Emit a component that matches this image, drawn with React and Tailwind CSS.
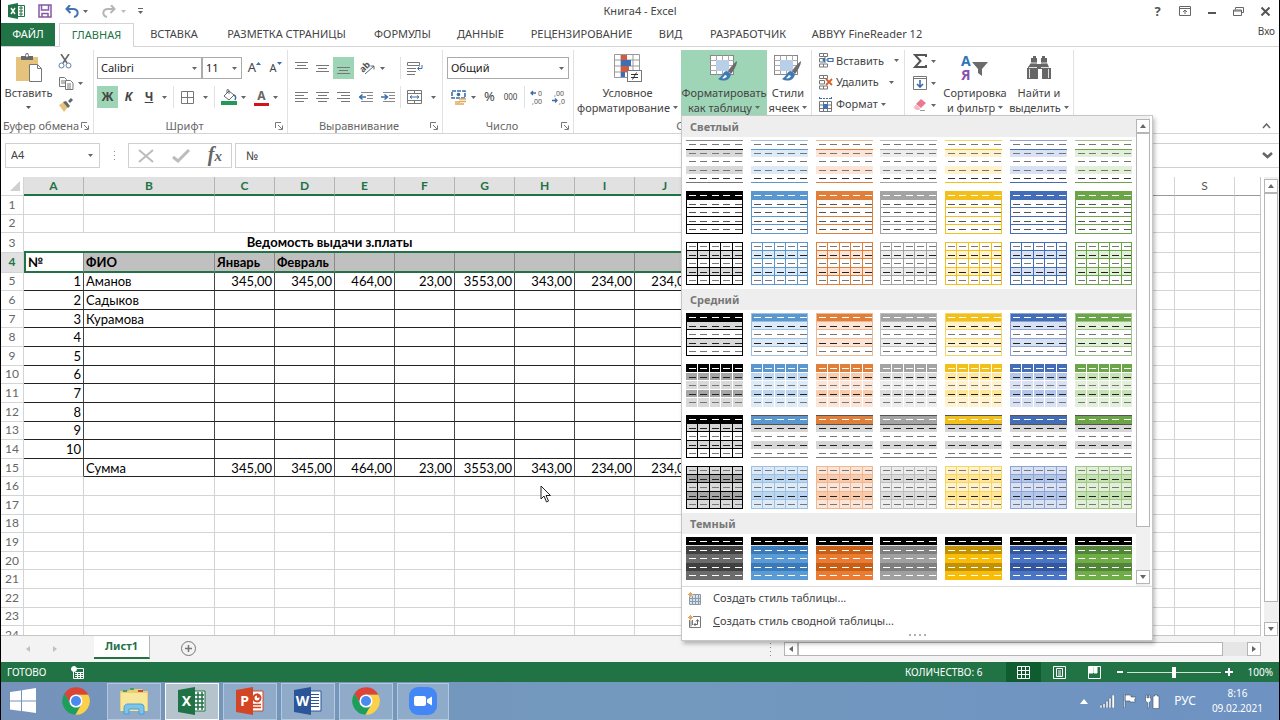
import React from 'react';

const UI_FONT = 'font-["Noto_Sans","Open_Sans",sans-serif]';
const CELL_FONT = 'font-["Lato","Noto_Sans",sans-serif]';

const TABS = [
  { label: 'ВСТАВКА', width: 'w-[76px]' },
  { label: 'РАЗМЕТКА СТРАНИЦЫ', width: 'w-[149px]' },
  { label: 'ФОРМУЛЫ', width: 'w-[83px]' },
  { label: 'ДАННЫЕ', width: 'w-[73px]' },
  { label: 'РЕЦЕНЗИРОВАНИЕ', width: 'w-[129px]' },
  { label: 'ВИД', width: 'w-[49px]' },
  { label: 'РАЗРАБОТЧИК', width: 'w-[106px]' },
  { label: 'ABBYY FineReader 12', width: 'w-[132px]' },
];

const PALETTES = [
  { accent: '#000000', tint: '#d9d9d9', mid: '#a6a6a6', soft: '#000000', dark: '#404040', light: '#6b6b6b' },
  { accent: '#5b97cf', tint: '#ddebf9', mid: '#bdd7f0', soft: '#9dc0e2', dark: '#3a7ab8', light: '#5b9bd5' },
  { accent: '#e07f3a', tint: '#fce4d6', mid: '#f8cbad', soft: '#efb893', dark: '#c85f16', light: '#ea7b33' },
  { accent: '#a3a3a3', tint: '#ededed', mid: '#dbdbdb', soft: '#bdbdbd', dark: '#7f7f7f', light: '#a0a0a0' },
  { accent: '#f3bf1b', tint: '#fff2cc', mid: '#ffe699', soft: '#f5d565', dark: '#c29204', light: '#f8bd08' },
  { accent: '#446db8', tint: '#d9e1f5', mid: '#b4c6ea', soft: '#8ea5d4', dark: '#35579e', light: '#4a74c4' },
  { accent: '#6ca548', tint: '#e2f0da', mid: '#c6e2b4', soft: '#a0c587', dark: '#52853a', light: '#6fad47' },
];

const SECTIONS = [
  { title: 'Светлый', styles: ['lines', 'boxed', 'grid'] },
  { title: 'Средний', styles: ['banded', 'blocks', 'gray', 'tinted'] },
  { title: 'Темный', styles: ['dark'] },
];

const COL_X = [0, 11, 23, 34, 46, 57];
const ROW_Y = [0, 9, 17, 26, 34, 43];

const COLUMNS = 'ABCDEFGHIJKLMNOPQRST'.split('');
const LAST_SELECTED = 9;

const AMOUNTS = ['345,00', '345,00', '464,00', '23,00', '3553,00', '343,00', '234,00', '234,00'];
const CELLS = {
  4: ['№', 'ФИО', 'Январь', 'Февраль'],
  5: ['1', 'Аманов', ...AMOUNTS],
  6: ['2', 'Садыков'],
  7: ['3', 'Курамова'],
  8: ['4'],
  9: ['5'],
  10: ['6'],
  11: ['7'],
  12: ['8'],
  13: ['9'],
  14: ['10'],
  15: ['', 'Сумма', ...AMOUNTS],
};

function Caret({ className = 'text-[#666]' }) {
  return (
    <svg width="5" height="3" viewBox="0 0 5 3" className={`shrink-0 ${className}`}>
      <path d="M0 0H5L2.5 3Z" fill="currentColor" />
    </svg>
  );
}

/* ---------- Table style gallery ---------- */

function rowFill(style, p, row) {
  const odd = row % 2 === 1;
  if (style === 'dark') return row === 0 ? '#000' : odd ? p.dark : p.light;
  if (row === 0 && ['boxed', 'banded', 'blocks', 'gray'].includes(style)) return p.accent;
  if (style === 'boxed') return '#fff';
  if (style === 'blocks' || style === 'tinted') return odd ? p.mid : p.tint;
  if (style === 'gray') return odd ? '#d6d6d6' : '#fff';
  return odd ? p.tint : '#fff';
}

function dashFill(style, row) {
  if (style === 'dark') return '#fff';
  if (row === 0 && ['boxed', 'banded', 'blocks', 'gray'].includes(style)) return '#fff';
  if (style === 'lines') return row === 4 ? '#333' : '#777';
  if (style === 'boxed') return '#555';
  return row % 2 ? '#222' : '#777';
}

function StyleSwatch({ style, palette }) {
  const isBlack = palette.accent === '#000000';
  const line = style === 'banded' || style === 'tinted' ? palette.soft : palette.accent;
  const hasGrid = style === 'grid' || style === 'tinted' || (style === 'gray' && isBlack);
  const hasRows = hasGrid || style === 'boxed' || style === 'banded';

  return (
    <svg width="57" height="43" viewBox="0 0 57 43" shapeRendering="crispEdges" className="block">
      {[0, 1, 2, 3, 4].map((r) => (
        <rect key={r} y={ROW_Y[r]} width="57" height={ROW_Y[r + 1] - ROW_Y[r]} fill={rowFill(style, palette, r)} />
      ))}
      {hasRows && [1, 2, 3, 4].map((r) => <rect key={r} y={ROW_Y[r] - 1} width="57" height="1" fill={line} />)}
      {hasGrid && [1, 2, 3, 4].map((c) => <rect key={c} x={COL_X[c]} width="1" height="43" fill={line} />)}
      {hasRows && <rect x="0.5" y="0.5" width="56" height="42" fill="none" stroke={line} />}
      {style === 'blocks' && (
        <>
          {[1, 2, 3, 4].map((c) => <rect key={c} x={COL_X[c]} width="1" height="43" fill="#fff" />)}
          {[1, 2, 3, 4].map((r) => <rect key={r} y={ROW_Y[r] - 1} width="57" height="1" fill="#fff" />)}
        </>
      )}
      {style === 'lines' && (
        <>
          <rect width="57" height="1" fill={isBlack ? '#888' : palette.soft} />
          <rect y="9" width="57" height="1" fill={palette.accent} />
          <rect y="42" width="57" height="1" fill={isBlack ? '#777' : palette.accent} />
        </>
      )}
      {style === 'gray' && !isBlack && (
        <>
          <rect width="57" height="1" fill="#555" />
          <rect y="9" width="57" height="1" fill="#555" />
          <rect y="42" width="57" height="1" fill="#777" />
        </>
      )}
      {style === 'dark' && <rect y="8" width="57" height="1" fill="#ddd" />}
      {[0, 1, 2, 3, 4].map((r) =>
        [0, 1, 2, 3, 4].map((c) => (
          <rect key={`${r}-${c}`} x={COL_X[c] + 3} y={ROW_Y[r] + 4} width="7" height="1" fill={dashFill(style, r)} />
        ))
      )}
    </svg>
  );
}

function ScrollButton({ dir, label }) {
  const paths = { up: 'M1 6L4 2L7 6Z', down: 'M1 2L4 6L7 2Z', left: 'M6 1L2 4L6 7Z', right: 'M2 1L6 4L2 7Z' };
  return (
    <button aria-label={label} className="flex h-[14px] w-[14px] shrink-0 items-center justify-center border border-[#b5b5b5] bg-white">
      <svg width="8" height="8" viewBox="0 0 8 8"><path d={paths[dir]} fill="#666" /></svg>
    </button>
  );
}

function StyleGallery() {
  return (
    <div className="absolute left-0 top-full z-20 w-[472px] border border-[#c6c6c6] bg-white text-[#444] shadow-[2px_3px_4px_rgba(0,0,0,0.25)]">
      <div className="flex h-[470px]">
        <div className="flex-1 overflow-hidden">
          {SECTIONS.map((section) => (
            <div key={section.title} className="pb-1">
              <h3 className="h-[21px] bg-[#eeeeee] pl-2 text-left text-[11px] font-bold leading-[21px] text-[#777]">{section.title}</h3>
              <div className="flex flex-col gap-2 px-1 pt-[3px]">
                {section.styles.map((style) => (
                  <div key={style} className="flex justify-between">
                    {PALETTES.map((p) => (
                      <button key={p.accent} aria-label={`${section.title} ${style}`}>
                        <StyleSwatch style={style} palette={p} />
                      </button>
                    ))}
                  </div>
                ))}
              </div>
            </div>
          ))}
        </div>
        <div className="mr-[2px] flex flex-col bg-[#f0f0f0] pb-[2px] pt-[3px]">
          <ScrollButton dir="up" label="Вверх" />
          <div className="h-[394px] border border-[#b5b5b5] bg-white" />
          <div className="flex-1" />
          <ScrollButton dir="down" label="Вниз" />
        </div>
      </div>
      <div className="border-t border-[#dcdcdc] text-[11px]">
        <button className="flex h-[23px] w-full items-center gap-3 pl-[6px] text-left">
          <svg width="13" height="13" viewBox="0 0 13 13">
            <path d="M3.5 2.5h9v10h-11v-8M1.5 6.5h11M1.5 9.5h11M4.5 4v8.5M7.5 2.5v10M10.5 2.5v10" fill="#d5e3f1" stroke="#8c9aa8" />
            <path d="M0 2.5h5M2.5 0v5M1 1l3 3M4 1L1 4" stroke="#e2a864" />
          </svg>
          <span>Созд<u>а</u>ть стиль таблицы...</span>
        </button>
        <button className="flex h-[22px] w-full items-center gap-3 pl-[6px] text-left">
          <svg width="13" height="13" viewBox="0 0 13 13">
            <path d="M5 1.5h7.5v11h-11V5M4.5 5v5M3 5.5v6" fill="none" stroke="#777" />
            <path d="M6 9.5h3.5V5M8 6.5l1.5-2 1.5 2M7.5 8L6 9.5 7.5 11" fill="none" stroke="#666" />
            <path d="M0 2.5h5M2.5 0v5M1 1l3 3M4 1L1 4" stroke="#e2a864" />
          </svg>
          <span><u>С</u>оздать стиль сводной таблицы...</span>
        </button>
        <div className="flex h-2 items-start justify-center gap-[3px] pt-[2px]">
          {[0, 1, 2, 3].map((i) => <i key={i} className="h-[2px] w-[2px] bg-[#b0b0b0]" />)}
        </div>
      </div>
    </div>
  );
}

/* ---------- Ribbon ---------- */

function Group({ label, width, launcher, children }) {
  return (
    <section className={`flex shrink-0 flex-col border-r border-[#e1e1e1] ${width}`}>
      <div className="flex h-[65px]">{children}</div>
      <div className="flex h-[18px] items-center pt-1 text-[11px] leading-[14px] text-[#666]">
        <span className="flex-1 whitespace-nowrap text-center">{label}</span>
        {launcher && (
          <button aria-label={`Параметры: ${label}`} className="mr-1">
            <svg width="8" height="8" viewBox="0 0 8 8" fill="none" stroke="#777">
              <path d="M0.5 6V0.5H6M3 3l4 4M7.5 3.5v4h-4" />
            </svg>
          </button>
        )}
      </div>
    </section>
  );
}

function Tool({ label, width = 'w-[21px]', active, children }) {
  return (
    <button aria-label={label} className={`flex h-[22px] shrink-0 items-center justify-center gap-1 ${width} ${active ? 'bg-[#9fd5b7]' : ''}`}>
      {children}
    </button>
  );
}

function BigButton({ width, icon, lines, active, caretBelow }) {
  return (
    <button className={`flex h-[65px] shrink-0 flex-col items-center text-[11px] leading-[15px] text-[#444] ${width} ${active ? 'bg-[#9fd5b7]' : ''}`}>
      <span className="flex h-[35px] items-center pt-px">{icon}</span>
      <span className="whitespace-nowrap">{lines[0]}</span>
      <span className="flex h-[15px] items-center gap-[3px] whitespace-nowrap">
        {lines[1]}
        <Caret className={caretBelow ? 'text-[#555]' : 'text-[#666]'} />
      </span>
    </button>
  );
}

function Combo({ label, value, width }) {
  return (
    <label className={`flex h-[22px] items-center border border-[#ababab] pr-[4px] ${width}`}>
      <select aria-label={label} className="min-w-0 flex-1 appearance-none bg-transparent pl-[3px] text-[11px] text-[#222] outline-none">
        <option>{value}</option>
      </select>
      <Caret />
    </label>
  );
}

function Divider() {
  return <i className="h-[22px] w-px shrink-0 bg-[#e1e1e1]" />;
}

function Lines({ rows, className = '' }) {
  return (
    <svg width="14" height="12" viewBox="0 0 14 12" className={className} shapeRendering="crispEdges">
      {rows.map(([x, y, w]) => <rect key={y} x={x} y={y} width={w} height="1" fill="#777" />)}
    </svg>
  );
}

function Indent({ right }) {
  return (
    <svg width="15" height="11" viewBox="0 0 15 11">
      <path d="M2 .5h12M8 3.5h6M8 6.5h6M2 9.5h12" stroke="#888" />
      <path d={right ? 'M0 5h6M3.5 2.5L6.5 5L3.5 7.5' : 'M1 5h6M3.5 2.5L.5 5L3.5 7.5'} fill="none" stroke="#3b6ea8" strokeWidth="1.5" />
    </svg>
  );
}

function TableBrush() {
  return (
    <svg width="28" height="28" viewBox="0 0 28 28">
      <rect x=".5" y="1.5" width="23" height="19" fill="#fff" stroke="#888" />
      <path d="M.5 6.5h23M.5 11.5h23M.5 16.5h23M6.5 1.5v19M12.5 1.5v19M18.5 1.5v19" stroke="#aaa" fill="none" />
      <rect x="6" y="6" width="13" height="11" fill="#b9cfe8" />
      <path d="M27 7c-3 2-7 7-9 10l3 3c3-4 6-9 6-13z" fill="#6b6b6b" />
      <path d="M17 17c-4 0-4 5-9 8 5 3 12 2 13-5z" fill="#3f7ab5" />
      <path d="M12 24c2 1 4 0 5-2l-2-1c-1 1-1 2-3 3z" fill="#fff" />
    </svg>
  );
}

function CellsIcon({ kind }) {
  return (
    <svg width="15" height="15" viewBox="0 0 15 15" fill="none">
      {kind === 'format' ? (
        <>
          <path d="M.5 0v3M12.5 0v3M1 1.5h11" stroke="#3b6ea8" strokeDasharray="2 1" />
          <path d="M.5 4.5h12v10H.5zM.5 8h12M.5 11.5h12M4.5 4.5v10M8.5 4.5v10" stroke="#777" />
          <rect x="4" y="7" width="5" height="5" fill="#3f74b0" />
        </>
      ) : (
        <>
          <path d="M.5 .5h4v3h-4zM4.5 .5h4v3h-4zM.5 11h4v3h-4zM4.5 11h4v3h-4zM.5 5.5h5V9h-5z" stroke="#777" />
          {kind === 'insert' ? (
            <path d="M14 5.5H9v3h5zM9 7H4M6.5 4.5L4 7l2.5 2.5" stroke="#3b6ea8" strokeWidth="1.2" />
          ) : (
            <path d="M7 4l6 6M13 4l-6 6" stroke="#d9602c" strokeWidth="1.8" />
          )}
        </>
      )}
    </svg>
  );
}

function ClipboardGroup() {
  return (
    <Group label="Буфер обмена" width="w-[93px]" launcher>
      <BigButton
        width="w-[55px]"
        caretBelow
        lines={['Вставить', '']}
        icon={
          <svg width="28" height="30" viewBox="0 0 28 30">
            <rect x="1" y="4" width="22" height="24" fill="#e5c37d" />
            <path d="M6 7V3h4c0-4 4-4 4 0h4v4z" fill="#686868" />
            <circle cx="12" cy="2.5" r="1.2" fill="#fff" />
            <path d="M14.5 11.5h8l4 4v13h-12z" fill="#fff" stroke="#777" />
            <path d="M22.5 11.5v4h4" fill="none" stroke="#777" />
          </svg>
        }
      />
      <div className="flex flex-col">
        <Tool label="Вырезать" width="w-[18px]">
          <svg width="14" height="15" viewBox="0 0 14 15" fill="none">
            <path d="M3 0l6 9M11 0L5 9" stroke="#666" strokeWidth="1.6" />
            <circle cx="3.5" cy="11.5" r="2.5" stroke="#5b7fa8" />
            <circle cx="10.5" cy="11.5" r="2.5" stroke="#5b7fa8" />
          </svg>
        </Tool>
        <Tool label="Копировать" width="w-[30px]">
          <svg width="15" height="13" viewBox="0 0 15 13" fill="#fff" stroke="#777">
            <path d="M.5 .5h5l2 2v7h-7zM2 4h4M2 6h4" />
            <path d="M6.5 3.5h5l2.5 2.5v6.5h-7.5zM8 7h4M8 9h4M8 11h4" />
          </svg>
          <Caret />
        </Tool>
        <Tool label="Формат по образцу" width="w-[18px]">
          <svg width="15" height="14" viewBox="0 0 15 14">
            <path d="M1 7l5-3 4 5-4 5z" fill="#e5c37d" />
            <path d="M5 4l3-1 4 5-2 2zM10 3l3-3 2 2-3 3z" fill="#666" />
          </svg>
        </Tool>
      </div>
    </Group>
  );
}

function FontGroup() {
  return (
    <Group label="Шрифт" width="w-[194px]" launcher>
      <div className="flex flex-col gap-[7px] pl-[3px] pt-[7px] text-[#444]">
        <div className="flex">
          <Combo label="Шрифт" value="Calibri" width="w-[105px]" />
          <Combo label="Размер шрифта" value="11" width="w-[40px]" />
          <Tool label="Увеличить размер">
            <span className="pl-1 text-[13px]">A</span>
            <svg width="5" height="12" viewBox="0 0 5 12" className="-ml-1 shrink-0"><path d="M0 3L2.5 0L5 3Z" fill="#3b6ea8" /></svg>
          </Tool>
          <Tool label="Уменьшить размер">
            <span className="pl-1 text-[11px]">A</span>
            <svg width="5" height="12" viewBox="0 0 5 12" className="-ml-1 shrink-0"><path d="M0 0H5L2.5 3Z" fill="#3b6ea8" /></svg>
          </Tool>
        </div>
        <div className="flex text-[12px]">
          <Tool label="Полужирный" active><b>Ж</b></Tool>
          <Tool label="Курсив"><b><i>К</i></b></Tool>
          <Tool label="Подчеркнутый" width="w-[34px]"><b><u>Ч</u></b><span className="w-px" /><Caret /></Tool>
          <Divider />
          <Tool label="Границы" width="w-[40px]">
            <svg width="13" height="13" viewBox="0 0 13 13" fill="none" stroke="#777"><path d="M.5 .5h12v12H.5zM6.5 .5v12M.5 6.5h12" /></svg>
            <span className="w-px" /><Caret />
          </Tool>
          <Divider />
          <Tool label="Цвет заливки" width="w-[36px]">
            <svg width="16" height="16" viewBox="0 0 16 16" fill="none">
              <path d="M3 7l5-5 5 4-5 5zM6 4V1c0-1 2-1 2 1v3" stroke="#666" />
              <path d="M13 6c2 1 2 3 1 5" stroke="#3b6ea8" strokeWidth="1.5" />
              <rect y="12" width="16" height="4" fill="#1f9a57" />
            </svg>
            <Caret />
          </Tool>
          <Tool label="Цвет текста" width="w-[30px]">
            <span className="h-[17px] w-[15px] border-b-[3px] border-[#d0141a] text-center text-[12px] font-bold leading-[14px] text-[#666]">A</span>
            <Caret />
          </Tool>
        </div>
      </div>
    </Group>
  );
}

function AlignmentGroup() {
  return (
    <Group label="Выравнивание" width="w-[155px]" launcher>
      <div className="flex flex-col gap-[7px] pl-[3px] pt-[7px]">
        <div className="flex">
          <Tool label="По верхнему краю"><Lines rows={[[0, 0, 13], [2, 3, 9], [0, 6, 13]]} /></Tool>
          <Tool label="По середине"><Lines rows={[[0, 3, 13], [2, 6, 9], [0, 9, 13]]} /></Tool>
          <Tool label="По нижнему краю" active><Lines rows={[[0, 5, 13], [2, 8, 9], [0, 11, 13]]} /></Tool>
          <Tool label="Ориентация" width="w-[37px]">
            <svg width="16" height="14" viewBox="0 0 16 14" className="overflow-visible">
              <text x="0" y="9" fontSize="9" fontWeight="bold" fill="#555" transform="rotate(-45 5 7)">ab</text>
              <path d="M5 13L14 5M10.5 5H14v3.5" fill="none" stroke="#666" />
            </svg>
            <Caret />
          </Tool>
          <span className="w-[9px]" />
          <Divider />
          <Tool label="Перенести текст" width="w-[28px]">
            <svg width="16" height="15" viewBox="0 0 16 15" fill="none">
              <path d="M.5 1.5h12v3H.5zM0 7.5h9M0 10.5h9M0 13.5h8" stroke="#777" />
              <path d="M15 4v3.5h-4M12.5 5.5l-2 2 2 2" stroke="#3b6ea8" />
            </svg>
          </Tool>
        </div>
        <div className="flex">
          <Tool label="По левому краю"><Lines rows={[[0, 1, 13], [0, 4, 9], [0, 7, 13], [0, 10, 9]]} /></Tool>
          <Tool label="По центру"><Lines rows={[[0, 1, 13], [2, 4, 9], [0, 7, 13], [2, 10, 9]]} /></Tool>
          <Tool label="По правому краю"><Lines rows={[[0, 1, 13], [4, 4, 9], [0, 7, 13], [4, 10, 9]]} /></Tool>
          <Tool label="Уменьшить отступ" width="w-[25px]"><Indent /></Tool>
          <Tool label="Увеличить отступ" width="w-[18px]"><Indent right /></Tool>
          <span className="w-[3px]" />
          <Divider />
          <Tool label="Объединить" width="w-[40px]">
            <svg width="15" height="14" viewBox="0 0 15 14" fill="none" stroke="#777">
              <path d="M.5 .5h14v13H.5zM.5 3.5h14M.5 10.5h14M7.5 .5v3M7.5 10.5v3" />
              <path d="M3 7h9M5 5.5L3 7l2 1.5M10 5.5L12 7l-2 1.5" stroke="#3b6ea8" />
            </svg>
            <span className="w-px" /><Caret />
          </Tool>
        </div>
      </div>
    </Group>
  );
}

function NumberGroup() {
  return (
    <Group label="Число" width="w-[131px]" launcher>
      <div className="flex flex-col gap-[7px] pl-1 pt-[7px] text-[#444]">
        <Combo label="Числовой формат" value="Общий" width="w-[122px]" />
        <div className="flex">
          <Tool label="Финансовый формат" width="w-[32px]">
            <svg width="16" height="15" viewBox="0 0 16 15">
              <path d="M1 1h13v7H1z" fill="#fff" stroke="#3b6ea8" strokeWidth="1.6" strokeDasharray="4 1" />
              <circle cx="7.5" cy="4.5" r="1.8" fill="#3b6ea8" />
              <path d="M8 9h7M8 11.500h7M4 12h5M4 14h9" stroke="#e0a95a" strokeWidth="1.5" />
            </svg>
            <Caret />
          </Tool>
          <Tool label="Процентный формат"><span className="text-[13px]">%</span></Tool>
          <Tool label="Формат с разделителями"><span className="text-[8px]">000</span></Tool>
          <span className="w-[3px]" />
          <Divider />
          <Tool label="Увеличить разрядность" width="w-[24px]">
            <svg width="14" height="14" viewBox="0 0 14 14" className="overflow-visible">
              <path d="M1 3h5M3 1L1 3l2 2" fill="none" stroke="#3b6ea8" strokeWidth="1.3" />
              <text x="8" y="6" fontSize="7" fill="#555">0</text>
              <text x="2" y="14" fontSize="7" fill="#555">,00</text>
            </svg>
          </Tool>
          <Tool label="Уменьшить разрядность" width="w-[20px]">
            <svg width="14" height="14" viewBox="0 0 14 14" className="overflow-visible">
              <text x="2" y="6" fontSize="7" fill="#555">,00</text>
              <path d="M0 10.500h5M3 8.500l2 2-2 2" fill="none" stroke="#3b6ea8" strokeWidth="1.3" />
              <text x="7" y="14" fontSize="7" fill="#555">,0</text>
            </svg>
          </Tool>
        </div>
      </div>
    </Group>
  );
}

function StylesGroup() {
  return (
    <Group label="Стили" width="w-[238px]">
      <BigButton
        width="w-[107px]"
        lines={['Условное', 'форматирование']}
        icon={
          <svg width="28" height="29" viewBox="0 0 28 29">
            <path d="M.5 .5h25v23H.5zM.5 6h25M.5 12h25M.5 18h25M7 .5v23M19 .5v23" fill="#fff" stroke="#999" />
            <rect x="7" y="1" width="6" height="5" fill="#cf5b43" />
            <rect x="7" y="6" width="10" height="6" fill="#3f6fb0" />
            <rect x="7" y="12" width="8" height="6" fill="#cf5b43" />
            <rect x="7" y="18" width="4" height="5" fill="#3f6fb0" />
            <rect x="13.5" y="16.5" width="14" height="11" fill="#fff" stroke="#777" />
            <path d="M17 20.5h7M17 23.5h7M22.5 18.5l-4 7" stroke="#333" />
          </svg>
        }
      />
      <div className="relative">
        <BigButton width="w-[86px]" active icon={<TableBrush />} lines={['Форматировать', 'как таблицу']} />
        <StyleGallery />
      </div>
      <BigButton width="w-[42px]" icon={<TableBrush />} lines={['Стили', 'ячеек']} />
    </Group>
  );
}

function CellsGroup() {
  const rows = [
    { kind: 'insert', label: 'Вставить', gap: 'gap-[10px]' },
    { kind: 'delete', label: 'Удалить', gap: 'gap-[10px]' },
    { kind: 'format', label: 'Формат', gap: 'gap-[3px]' },
  ];
  return (
    <Group label="Ячейки" width="w-[93px]">
      <div className="flex flex-col pl-[7px]">
        {rows.map((row) => (
          <button key={row.kind} className="flex h-[22px] items-center gap-[2px] text-[11px] text-[#444]">
            <CellsIcon kind={row.kind} />
            <span className={`flex items-center ${row.gap}`}>{row.label}<Caret /></span>
          </button>
        ))}
      </div>
    </Group>
  );
}

function EditGroup() {
  return (
    <Group label="Редактирование" width="w-[169px]">
      <div className="flex w-[36px] flex-col pl-[6px]">
        <Tool label="Сумма" width="w-[27px]">
          <svg width="14" height="14" viewBox="0 0 14 14" fill="none" stroke="#555" strokeWidth="2"><path d="M13 3V1H2l5.500 6L2 13h11v-2" /></svg>
          <Caret />
        </Tool>
        <Tool label="Заполнить" width="w-[27px]">
          <svg width="14" height="14" viewBox="0 0 14 14" fill="none">
            <path d="M.5 .5h13v13H.5zM.5 2.5h13" stroke="#777" />
            <path d="M7 4v7M4 8l3 3 3-3" stroke="#3b6ea8" strokeWidth="1.6" />
          </svg>
          <Caret />
        </Tool>
        <Tool label="Очистить" width="w-[27px]">
          <svg width="14" height="13" viewBox="0 0 14 13">
            <path d="M8 0l5 4-5 5-5-4z" fill="#e8798f" />
            <path d="M3 5.5l4.5 4L6 11H3L.5 8.500z" fill="#f5b9c5" />
            <path d="M7 11.5h5" stroke="#999" />
          </svg>
          <Caret />
        </Tool>
      </div>
      <BigButton
        width="w-[68px]"
        lines={['Сортировка', 'и фильтр']}
        icon={
          <svg width="28" height="28" viewBox="0 0 28 28" className="overflow-visible">
            <text x="0" y="12" fontSize="14" fill="#2f75b5" fontWeight="bold">А</text>
            <text x="0" y="26" fontSize="14" fill="#8a4fae" fontWeight="bold">Я</text>
            <path d="M11 8h16l-6 7v7l-4-3v-4z" fill="#6b6b6b" />
          </svg>
        }
      />
      <BigButton
        width="w-[60px]"
        lines={['Найти и', 'выделить']}
        icon={
          <svg width="26" height="26" viewBox="0 0 26 26" fill="#666">
            <path d="M5 3h2V1h3v2h1v6h4V3h1V1h3v2h2v5l2 4v1h2v11h-9V14h-4v10H1V13h1v-1l3-4z" />
            <path d="M3 12.500h8M15 12.500h8M5 8h6M15 8h6M3.500 14v9M22.500 14v9" stroke="#fff" strokeWidth=".8" />
          </svg>
        }
      />
    </Group>
  );
}

function TitleBar() {
  return (
    <header className="grid h-[23px] shrink-0 grid-cols-3 items-center bg-white pb-px text-[11px] text-[#444]">
      <div className="flex items-center pl-[7px]">
        <svg width="18" height="16" viewBox="0 0 18 16">
          <path d="M9 2.5h7.5v11H9M11 5h4M11 8h4M11 11h4M13 3v10" fill="#fff" stroke="#217346" />
          <path d="M0 2l10-2v16L0 14z" fill="#217346" />
          <path d="M3 5l4 6M7 5l-4 6" stroke="#fff" strokeWidth="1.5" />
        </svg>
        <button aria-label="Сохранить" className="ml-3">
          <svg width="14" height="14" viewBox="0 0 14 14" fill="none" stroke="#8559a5" strokeWidth="1.5"><path d="M1 1h12v12H1zM3.500 1v5h7V1M4 13V9.500h6V13" /></svg>
        </button>
        <button aria-label="Отменить" className="ml-[13px] flex items-center gap-[4px]">
          <svg width="14" height="13" viewBox="0 0 14 13" fill="none" stroke="#4472b5" strokeWidth="2"><path d="M5 0L1.500 4L5.500 8M2 4h6c6 0 6 7 1 8" /></svg>
          <Caret />
        </button>
        <button aria-label="Вернуть" className="ml-[14px] flex items-center gap-[5px]">
          <svg width="14" height="13" viewBox="0 0 14 13" fill="none" stroke="#b5b5b5" strokeWidth="2"><path d="M9 0l3.500 4L8.500 8M12 4H6c-6 0-6 7-1 8" /></svg>
          <Caret className="text-[#bbb]" />
        </button>
        <button aria-label="Настройка панели" className="ml-3 flex flex-col items-center gap-[2px]">
          <i className="h-px w-[5px] bg-[#666]" />
          <Caret />
        </button>
      </div>
      <h1 className="text-center">Книга4 - Excel</h1>
      <div className="flex justify-end">
        <button className="w-[27px] text-[13px] font-bold leading-4 text-[#555]">?</button>
        <button aria-label="Параметры ленты" className="flex w-[27px] items-center justify-center">
          <svg width="12" height="10" viewBox="0 0 12 10" fill="none" stroke="#666"><path d="M.5 .5h11v9H.5zM.5 2.5h11M6 8V4M4 6l2-2 2 2" /></svg>
        </button>
        <button aria-label="Свернуть" className="flex w-[27px] items-center justify-center"><i className="mt-1 h-[2px] w-2 bg-[#555]" /></button>
        <button aria-label="Восстановить" className="flex w-[27px] items-center justify-center">
          <svg width="11" height="9" viewBox="0 0 11 9" fill="none" stroke="#666"><path d="M2.500 2.500v-2h8v5h-2M.5 3h8v5.500h-8zM.5 4h8" /></svg>
        </button>
        <button aria-label="Закрыть" className="flex w-[27px] items-center justify-center">
          <svg width="9" height="9" viewBox="0 0 9 9" stroke="#555" strokeWidth="2"><path d="M.5 .5l8 8M8.500 .5l-8 8" /></svg>
        </button>
      </div>
    </header>
  );
}

function TabRow() {
  return (
    <nav className="flex h-[24px] shrink-0 border-b border-[#d4d4d4] text-[11px] text-[#444]">
      <button className="w-[54px] bg-[#217346] text-white">ФАЙЛ</button>
      <button className="-mb-px ml-[4px] mr-[2px] w-[75px] border border-b-0 border-[#d4d4d4] bg-white text-[#217346]">ГЛАВНАЯ</button>
      {TABS.map((tab) => (
        <button key={tab.label} className={`shrink-0 whitespace-nowrap text-center ${tab.width}`}>{tab.label}</button>
      ))}
      <a href="#login" className="ml-auto pr-1 pt-px text-[10px]">Вхо</a>
    </nav>
  );
}

function FormulaBar() {
  return (
    <div className="flex shrink-0 items-center bg-white py-[9px] text-[12px] text-[#444]">
      <div className="ml-1 flex h-[25px] w-[95px] items-center border border-[#d0d0d0] pr-[6px]">
        <input aria-label="Имя" defaultValue="A4" className="min-w-0 flex-1 pl-[5px] text-[11px] outline-none" />
        <Caret />
      </div>
      <div className="flex w-[28px] flex-col items-center gap-[3px]">
        {[0, 1, 2].map((i) => <i key={i} className="h-px w-px bg-[#888]" />)}
      </div>
      <div className="flex h-[25px] w-[104px] items-center justify-around border border-[#d0d0d0]">
        <button aria-label="Отмена">
          <svg width="16" height="14" viewBox="0 0 16 14" stroke="#bcbcbc" strokeWidth="2"><path d="M1 1l14 12M15 1L1 13" /></svg>
        </button>
        <button aria-label="Ввод">
          <svg width="18" height="14" viewBox="0 0 18 14" fill="none" stroke="#bcbcbc" strokeWidth="3"><path d="M1 8l5 4L17 1" /></svg>
        </button>
        <button aria-label="Вставить функцию" className="font-['Liberation_Serif',serif] text-[20px] font-bold italic leading-[23px] text-[#666]">
          f<span className="text-[15px]">x</span>
        </button>
      </div>
      <div className="ml-[3px] flex h-[25px] flex-1 items-center border border-r-0 border-[#d0d0d0] pr-[6px]">
        <input aria-label="Строка формул" defaultValue="№" className="min-w-0 flex-1 pl-[10px] outline-none" />
        <svg width="11" height="7" viewBox="0 0 11 7" fill="none" stroke="#666" strokeWidth="2.5"><path d="M1 1l4.500 4L10 1" /></svg>
      </div>
    </div>
  );
}

/* ---------- Sheet ---------- */

function cellBorders(row, col) {
  if (row === 3) return 'border-[#217346] border-b-2';
  if (row === 4 && col <= LAST_SELECTED) {
    return `border-b-2 border-r border-b-[#217346] border-r-[#888] ${col === 0 ? 'border-l-2 border-l-[#217346] bg-white' : 'bg-[#c0c0c0]'}`;
  }
  if (row >= 5 && row <= 15 && col <= LAST_SELECTED) {
    if (row === 15 && col === 0) return 'border-b border-r border-b-[#d4d4d4] border-r-[#444]';
    return 'border-b border-r border-b-[#222] border-r-[#444]';
  }
  return 'border-b border-r border-[#d4d4d4]';
}

function SheetRow({ row }) {
  const values = CELLS[row] || [];
  const selected = row === 4;
  return (
    <tr>
      <th scope="row" className={`border-b border-r border-[#d4d4d4] text-center text-[12px] ${selected ? 'bg-[#e1e1e1] font-bold text-[#217346]' : 'font-normal text-[#666]'}`}>{row}</th>
      {row === 3 && <td colSpan={9} className="border-b-2 border-[#217346] text-center font-bold">Ведомость выдачи з.платы</td>}
      {COLUMNS.map((name, col) => {
        if (row === 3 && col < 9) return null;
        const numeric = col !== 1 && !selected;
        const plainEdge = row === 3 && col > LAST_SELECTED;
        return (
          <td
            key={name}
            className={`whitespace-nowrap px-[2px] ${numeric ? 'text-right' : 'text-left'} ${selected ? 'font-bold' : ''} ${plainEdge ? 'border-b border-r border-[#d4d4d4]' : cellBorders(row, col)}`}
          >
            {values[col]}
          </td>
        );
      })}
    </tr>
  );
}

function Sheet() {
  const rows = Array.from({ length: 24 }, (_, i) => i + 1);
  return (
    <main className="flex min-h-0 flex-1 bg-white">
      <div className="relative min-w-0 flex-1 overflow-hidden border-b border-r border-[#c6c6c6]">
        <table className={`h-[468px] w-px table-fixed border-separate border-spacing-0 text-[13px] leading-4 text-black ${CELL_FONT}`}>
          <colgroup>
            <col className="w-[23px]" />
            {COLUMNS.map((name) => <col key={name} className={name === 'B' ? 'w-[131px]' : 'w-[60px]'} />)}
          </colgroup>
          <thead>
            <tr className="h-[19px]">
              <th className="border-b border-r border-[#d4d4d4] p-0">
                <svg width="10" height="10" viewBox="0 0 10 10" className="ml-auto mr-[3px] block"><path d="M10 0v10H0z" fill="#d0d0d0" /></svg>
              </th>
              {COLUMNS.map((name, col) => (
                <th
                  key={name}
                  scope="col"
                  className={`border-r p-0 text-center text-[12px] ${col <= LAST_SELECTED ? 'border-b-2 border-b-[#217346] border-r-[#b5b5b5] bg-[#e1e1e1] font-bold text-[#217346]' : 'border-b border-b-[#999] border-r-[#d4d4d4] font-normal text-[#555]'}`}
                >
                  {name}
                </th>
              ))}
            </tr>
          </thead>
          <tbody>
            {rows.map((row) => <SheetRow key={row} row={row} />)}
          </tbody>
        </table>
        {/* Mouse pointer */}
        <svg width="12" height="18" viewBox="0 0 12 18" className="absolute left-[539px] top-[308px]">
          <path d="M1 1v13l3-3 2.500 6 2-1L6 10.500h4.500z" fill="#fff" stroke="#222" />
        </svg>
      </div>
      <div className="ml-[3px] flex w-[15px] flex-col bg-[#f0f0f0] pt-[2px]">
        <ScrollButton dir="up" label="Прокрутить вверх" />
        <div className="w-[14px] flex-1 border border-[#b5b5b5] bg-white" />
        <div className="h-5" />
        <ScrollButton dir="down" label="Прокрутить вниз" />
      </div>
    </main>
  );
}

function SheetBar() {
  return (
    <div className="flex h-[26px] shrink-0 items-start bg-[#f3f3f3]">
      <div className="flex h-full w-[93px] items-center gap-[21px] pl-6">
        <svg width="6" height="8" viewBox="0 0 6 8"><path d="M5 1L1 4L5 7Z" fill="#c0c0c0" /></svg>
        <svg width="6" height="8" viewBox="0 0 6 8"><path d="M1 1L5 4L1 7Z" fill="#c0c0c0" /></svg>
      </div>
      <button className="h-[23px] w-[56px] border-b-2 border-r border-b-[#217346] border-r-[#b5b5b5] bg-white text-[11px] font-bold text-[#217346]">Лист1</button>
      <button aria-label="Новый лист" className="ml-[31px] mt-[5px]">
        <svg width="15" height="15" viewBox="0 0 15 15" fill="none" stroke="#777"><circle cx="7.500" cy="7.500" r="7" /><path d="M4 7.500h7M7.500 4v7" strokeWidth="1.5" /></svg>
      </button>
      <div className="flex flex-1 flex-col items-end gap-[3px] pr-[13px] pt-[7px]">
        {[0, 1, 2, 3].map((i) => <i key={i} className="h-px w-px bg-[#888]" />)}
      </div>
      <div className="mr-[18px] mt-[6px] flex w-[477px] bg-[#e6e6e6]">
        <ScrollButton dir="left" label="Прокрутить влево" />
        <div className="w-[425px] border border-[#b5b5b5] bg-white" />
        <div className="flex-1" />
        <ScrollButton dir="right" label="Прокрутить вправо" />
      </div>
    </div>
  );
}

function StatusBar() {
  return (
    <footer className="flex h-5 shrink-0 items-center bg-[#217346] text-[10px] text-white">
      <span className="w-[70px] pl-[6px]">ГОТОВО</span>
      <svg width="13" height="13" viewBox="0 0 13 13" fill="none" stroke="#fff">
        <path d="M6 2.500h6.500v10h-10V6M4 6.500h8M4 8.500h8M4 10.500h8M6.500 6v6M9.500 6v6" />
        <circle cx="3" cy="3" r="2.5" fill="#fff" />
      </svg>
      <span className="ml-auto w-[101px]">КОЛИЧЕСТВО: 6</span>
      <button aria-label="Обычный" className="flex h-full w-[35px] items-center justify-center bg-[#0f5c31]">
        <svg width="13" height="13" viewBox="0 0 13 13" fill="none" stroke="#fff"><path d="M.5 .5h12v12H.5zM.5 4.500h12M.5 8.500h12M4.500 .5v12M8.500 .5v12" /></svg>
      </button>
      <button aria-label="Разметка страницы" className="flex h-full w-[36px] items-center justify-center">
        <svg width="13" height="13" viewBox="0 0 13 13" fill="none" stroke="#fff"><path d="M.5 .5h12v12H.5zM3.500 2.500h6v8h-6zM5 5h3M5 7h3M5 9h3" /></svg>
      </button>
      <button aria-label="Страничный режим" className="flex h-full w-[35px] items-center justify-center">
        <svg width="13" height="13" viewBox="0 0 13 13" fill="none" stroke="#fff"><path d="M.5 .5h12v12H.5z" /><path d="M1 1h4v6H1zM6 1h3v6H6z" fill="#fff" /></svg>
      </button>
      <button aria-label="Уменьшить" className="ml-[5px] h-[2px] w-[6px] bg-white" />
      <input
        type="range"
        aria-label="Масштаб"
        className="mx-[4px] h-3 w-[94px] appearance-none bg-transparent [&::-webkit-slider-runnable-track]:h-px [&::-webkit-slider-runnable-track]:bg-[#cfe3d7] [&::-webkit-slider-thumb]:-mt-[5px] [&::-webkit-slider-thumb]:h-[11px] [&::-webkit-slider-thumb]:w-1 [&::-webkit-slider-thumb]:appearance-none [&::-webkit-slider-thumb]:bg-white"
      />
      <button aria-label="Увеличить">
        <svg width="8" height="8" viewBox="0 0 8 8" stroke="#fff" strokeWidth="2"><path d="M0 4h8M4 0v8" /></svg>
      </button>
      <span className="w-[46px] pr-[6px] text-right">100%</span>
    </footer>
  );
}

/* ---------- Taskbar ---------- */

function ChromeIcon() {
  const sector = 'M5.54 12.03A22 22 0 0 1 43.6 14L24 14A10 10 0 0 0 15.34 29Z';
  return (
    <svg width="30" height="30" viewBox="0 0 48 48">
      <path d={sector} fill="#dc4437" />
      <path d={sector} fill="#fdd04a" transform="rotate(120 24 24)" />
      <path d={sector} fill="#1d9f5b" transform="rotate(240 24 24)" />
      <circle cx="24" cy="24" r="10.5" fill="#fff" />
      <circle cx="24" cy="24" r="8" fill="#4a89ee" />
    </svg>
  );
}

function OfficeIcon({ letter, color, chart }) {
  return (
    <svg width="29" height="28" viewBox="0 0 29 28">
      <path d="M15 4h12v20H15z" fill="#fff" stroke={color} />
      {chart === 'grid' && <path d="M17 8h9M17 12h9M17 16h9M17 20h9M20 5v18M24 5v18" stroke={color} strokeWidth="1.5" />}
      {chart === 'lines' && <path d="M17 7.500h8M17 10.500h8M17 13.500h8M17 16.500h8M17 19.500h8" stroke={color} />}
      {chart === 'pie' && (
        <>
          <circle cx="21" cy="11" r="3.5" fill="none" stroke={color} strokeWidth="2" />
          <path d="M21 11V6l4 4z" fill={color} />
          <path d="M17 17.500h8M17 20.500h8" stroke={color} strokeWidth="1.5" />
        </>
      )}
      <path d="M0 3L17 0v28L0 25z" fill={color} />
      <text x="8.5" y="19" textAnchor="middle" fontSize="14" fontWeight="bold" fill="#fff">{letter}</text>
    </svg>
  );
}

function TaskButton({ label, width, active, children }) {
  return (
    <button
      aria-label={label}
      className={`flex h-[37px] items-center justify-center border ${width} ${active ? 'border-white/90 bg-[#b4c3cc]' : 'border-white/35 bg-white/20'}`}
    >
      {children}
    </button>
  );
}

function Taskbar() {
  return (
    <div className="flex h-[38px] shrink-0 items-center bg-gradient-to-r from-[#7593ba] via-[#7399be] to-[#6e92c2] text-[12px] text-white">
      <button aria-label="Пуск" className="ml-[9px]">
        <svg width="27" height="26" viewBox="0 0 27 26" fill="#fff"><path d="M0 4l11-1.500V12.500H0zM12 2.300L26 0v12.500H12zM0 13.500h11V23L0 21.500zM12 13.500h14V25l-14-2z" /></svg>
      </button>
      <button aria-label="Chrome" className="ml-6 mr-4"><ChromeIcon /></button>
      <div className="flex gap-1">
        <TaskButton label="Проводник" width="w-[54px]">
          <svg width="32" height="28" viewBox="0 0 32 28">
            <path d="M2 4h8l2-2h12l1 2h5v20H2z" fill="#e9cf74" />
            <path d="M3 6h26v18H3z" fill="#f7e79c" />
            <path d="M5 3h4v2H5zM12 1h4v2h-4z" fill="#4b9f57" />
            <path d="M20 3h5v2h-5z" fill="#c9473c" />
            <path d="M6 27v-6c0-3 2-4 4-4h12c3 0 4 1 4 4v6h-5v-5H11v5z" fill="#7cc4ea" stroke="#4c9fd0" />
          </svg>
        </TaskButton>
        <TaskButton label="Excel" width="w-[54px]" active><OfficeIcon letter="X" color="#1f7245" chart="grid" /></TaskButton>
        <TaskButton label="PowerPoint" width="w-[54px]"><OfficeIcon letter="P" color="#d24625" chart="pie" /></TaskButton>
        <TaskButton label="Word" width="w-[54px]"><OfficeIcon letter="W" color="#2a5699" chart="lines" /></TaskButton>
        <TaskButton label="Chrome" width="w-[54px]"><ChromeIcon /></TaskButton>
        <TaskButton label="Zoom" width="w-[52px]">
          <svg width="28" height="28" viewBox="0 0 28 28">
            <rect width="28" height="28" rx="9" fill="#4287f5" />
            <rect x="5" y="9" width="12" height="10" rx="2" fill="#fff" />
            <path d="M18 12.500l5-3v9l-5-3z" fill="#fff" />
          </svg>
        </TaskButton>
      </div>
      <div className="ml-auto flex items-center">
        <svg width="8" height="5" viewBox="0 0 8 5"><path d="M0 5L4 0L8 5Z" fill="#fff" /></svg>
        <svg width="15" height="13" viewBox="0 0 15 13" className="ml-3" fill="#fff" stroke="#4c617c" strokeWidth=".5">
          <path d="M0 10h2v3H0zM3 8.500h2V13H3zM6 6h2v7H6zM9 3h2v10H9zM12 0h2.500v13H12z" />
        </svg>
        <svg width="14" height="14" viewBox="0 0 14 14" className="ml-2" fill="#fff" stroke="#3f536c" strokeWidth=".6">
          <path d="M.5 0h1.500v14H.5zM2 1h6v2h5l-1.500 3 1 2H7V7H2z" />
        </svg>
        <svg width="15" height="15" viewBox="0 0 15 15" className="ml-2" fill="#fff" stroke="#3f536c" strokeWidth=".6">
          <path d="M8 2h2V.5h2V2h2v12.500H8z" />
          <path d="M1 1h1.500v3h1V1H5v3h1v3L4 8.500V14H2.500V8.500L.5 7V4H1z" />
        </svg>
        <span className="ml-[14px]">РУС</span>
        <time className="ml-4 mr-[16px] text-center text-[10px] leading-[15px]">8:16<br />09.02.2021</time>
      </div>
    </div>
  );
}

export default function App() {
  return (
    <div className={`flex h-screen flex-col overflow-hidden border-x border-black bg-white ${UI_FONT}`}>
      <TitleBar />
      <TabRow />
      <div className="flex shrink-0 border-b border-[#d4d4d4] bg-white pt-[3px]">
        <ClipboardGroup />
        <FontGroup />
        <AlignmentGroup />
        <NumberGroup />
        <StylesGroup />
        <CellsGroup />
        <EditGroup />
        <button aria-label="Свернуть ленту" className="mb-1 ml-auto mr-2 self-end">
          <svg width="9" height="6" viewBox="0 0 9 6" fill="none" stroke="#666" strokeWidth="1.5"><path d="M1 5l3.500-4L8 5" /></svg>
        </button>
      </div>
      <FormulaBar />
      <Sheet />
      <SheetBar />
      <StatusBar />
      <Taskbar />
    </div>
  );
}
